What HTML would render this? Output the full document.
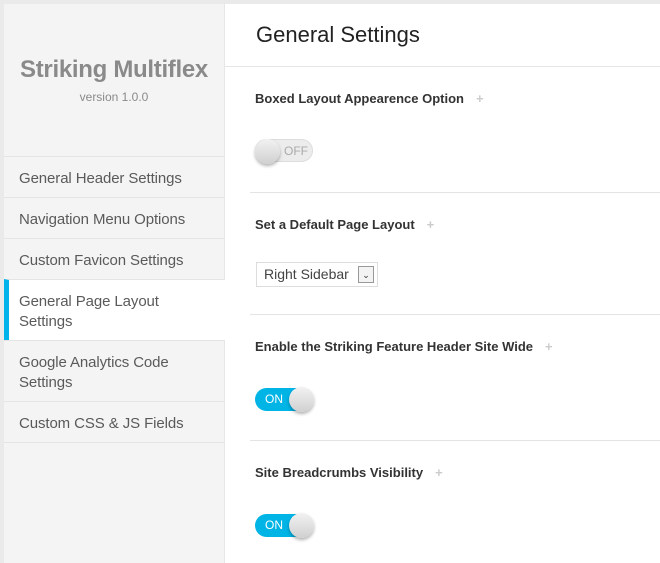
<!DOCTYPE html>
<html><head><meta charset="utf-8"><style>
*{box-sizing:border-box;margin:0;padding:0}
body{width:660px;height:563px;overflow:hidden;background:#eaeaea;font-family:"Liberation Sans",sans-serif;position:relative}
#side{position:absolute;left:4px;top:4px;width:221px;height:559px;background:#f4f4f4;border-right:1px solid #e6e6e6}
#main{position:absolute;left:225px;top:4px;width:435px;height:559px;background:#fff}
.brand{position:absolute;top:52px;left:0;width:220px;text-align:center;color:#8a8a8a;font-weight:bold;font-size:24px;letter-spacing:-0.3px}
.ver{position:absolute;top:86px;left:0;width:220px;text-align:center;color:#8a8a8a;font-size:12px}
.item{position:absolute;left:0;width:220px;border-top:1px solid #e4e4e4;color:#5a5a5a;font-size:15px;line-height:20px;padding:12px 15px 0 15px;letter-spacing:-0.1px}
.item.act{background:#fff;width:221px;border-left:5px solid #00b3ea;padding-left:10px}
h1{position:absolute;left:31px;top:18px;font-weight:normal;font-size:22px;color:#222}
.hline{position:absolute;left:0;top:62px;width:435px;height:1px;background:#e6e6e6}
.sep{position:absolute;left:25px;width:410px;height:1px;background:#e4e4e4}
.lab{position:absolute;left:30px;font-size:13px;font-weight:bold;color:#333;letter-spacing:0}
.lab span{color:#ccc;font-weight:bold;margin-left:12px;font-size:13px}
.tg{position:absolute;left:30px;width:58px;height:23px;border-radius:12px;font-size:12px;line-height:23px}
.tg.off{background:#ececec;border:1px solid #ddd;color:#aaa}
.tg.on{background:#00b4e6;color:#fff}
.knob{position:absolute;top:-1px;width:25px;height:25px;border-radius:50%;background:linear-gradient(#f2f2f2,#d0d0d0);box-shadow:0 2px 3px rgba(0,0,0,.3)}
.sel{position:absolute;left:31px;top:258px;width:122px;height:25px;border:1px solid #ddd;font-size:14px;color:#444;padding:3px 0 0 7px}
.sel i{position:absolute;right:3px;top:3px;width:16px;height:17px;border:1px solid #999;background:#f3f3f3;font-style:normal;font-size:9px;text-align:center;line-height:16px;color:#333}
</style></head><body>
<div id="side">
<div class="brand">Striking Multiflex</div>
<div class="ver">version 1.0.0</div>
<div class="item" style="top:152px;height:41px">General Header Settings</div>
<div class="item" style="top:193px;height:41px">Navigation Menu Options</div>
<div class="item" style="top:234px;height:41px">Custom Favicon Settings</div>
<div class="item act" style="top:275px;height:61px">General Page Layout<br>Settings</div>
<div class="item" style="top:336px;height:61px">Google Analytics Code<br>Settings</div>
<div class="item" style="top:397px;height:41px">Custom CSS &amp; JS Fields</div>
<div class="item" style="top:438px;height:1px;padding:0"></div>
</div>
<div id="main">
<h1>General Settings</h1>
<div class="hline"></div>
<div class="lab" style="top:87px">Boxed Layout Appearence Option<span>+</span></div>
<div class="tg off" style="top:135px"><div class="knob" style="left:-1px"></div><span style="position:absolute;left:28px">OFF</span></div>
<div class="sep" style="top:188px"></div>
<div class="lab" style="top:213px">Set a Default Page Layout<span>+</span></div>
<div class="sel">Right Sidebar<i>&#8964;</i></div>
<div class="sep" style="top:310px"></div>
<div class="lab" style="top:335px">Enable the Striking Feature Header Site Wide<span>+</span></div>
<div class="tg on" style="top:384px"><span style="position:absolute;left:10px">ON</span><div class="knob" style="left:34px"></div></div>
<div class="sep" style="top:436px"></div>
<div class="lab" style="top:461px">Site Breadcrumbs Visibility<span>+</span></div>
<div class="tg on" style="top:510px"><span style="position:absolute;left:10px">ON</span><div class="knob" style="left:34px"></div></div>
</div>
</body></html>
